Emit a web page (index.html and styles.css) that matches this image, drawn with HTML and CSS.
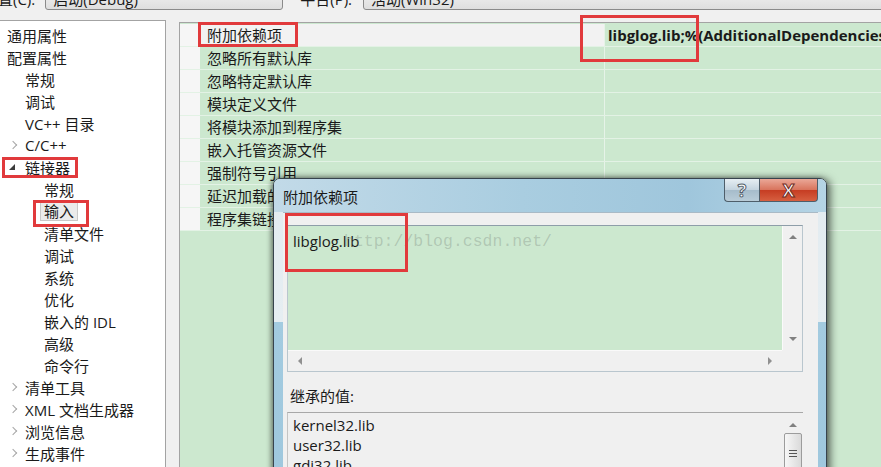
FILE: index.html
```html
<!DOCTYPE html>
<html lang="zh-CN">
<head>
    <meta charset="UTF-8">
    <title>链接器 - 输入</title>
    <link rel="stylesheet" href="styles.css">
</head>
<body>
    <div class="topbar">
        <span class="top-label label-config">置(C):</span>
        <div class="combo combo-config">启动(Debug)</div>
        <span class="top-label label-platform">平台(P):</span>
        <div class="combo combo-platform">活动(Win32)</div>
    </div>

    <div class="main">
        <ul class="tree">
            <li class="lvl0">通用属性</li>
            <li class="lvl0">配置属性</li>
            <li class="lvl1"><span class="twisty"></span>常规</li>
            <li class="lvl1"><span class="twisty"></span>调试</li>
            <li class="lvl1"><span class="twisty"></span>VC++ 目录</li>
            <li class="lvl1"><span class="twisty closed"></span>C/C++</li>
            <li class="lvl1"><span class="twisty open"></span>链接器</li>
            <li class="lvl2"><span class="twisty"></span>常规</li>
            <li class="lvl2"><span class="twisty"></span><span class="selected">输入</span></li>
            <li class="lvl2"><span class="twisty"></span>清单文件</li>
            <li class="lvl2"><span class="twisty"></span>调试</li>
            <li class="lvl2"><span class="twisty"></span>系统</li>
            <li class="lvl2"><span class="twisty"></span>优化</li>
            <li class="lvl2"><span class="twisty"></span>嵌入的 IDL</li>
            <li class="lvl2"><span class="twisty"></span>高级</li>
            <li class="lvl2"><span class="twisty"></span>命令行</li>
            <li class="lvl1"><span class="twisty closed"></span>清单工具</li>
            <li class="lvl1"><span class="twisty closed"></span>XML 文档生成器</li>
            <li class="lvl1"><span class="twisty closed"></span>浏览信息</li>
            <li class="lvl1"><span class="twisty closed"></span>生成事件</li>
        </ul>

        <div class="grid">
            <div class="row row-first">
                <div class="gutter"></div>
                <div class="name">附加依赖项</div>
                <div class="value"><b>libglog.lib;%(AdditionalDependencies)</b></div>
            </div>
            <div class="row"><div class="gutter"></div><div class="name">忽略所有默认库</div><div class="value"></div></div>
            <div class="row"><div class="gutter"></div><div class="name">忽略特定默认库</div><div class="value"></div></div>
            <div class="row"><div class="gutter"></div><div class="name">模块定义文件</div><div class="value"></div></div>
            <div class="row"><div class="gutter"></div><div class="name">将模块添加到程序集</div><div class="value"></div></div>
            <div class="row"><div class="gutter"></div><div class="name">嵌入托管资源文件</div><div class="value"></div></div>
            <div class="row"><div class="gutter"></div><div class="name">强制符号引用</div><div class="value"></div></div>
            <div class="row"><div class="gutter"></div><div class="name">延迟加载的 DLL</div><div class="value"></div></div>
            <div class="row"><div class="gutter"></div><div class="name">程序集链接资源</div><div class="value"></div></div>
        </div>
    </div>

    <!-- modal dialog on top of the property grid -->
    <div class="dialog">
        <div class="titlebar">
            <span class="title">附加依赖项</span>
            <div class="caption-buttons">
                <div class="cap-btn help">?</div>
                <div class="cap-btn close">X</div>
            </div>
        </div>
        <div class="client">
            <div class="edit">
                <div class="edit-text">libglog.lib</div>
                <div class="vscroll">
                    <span class="arrow up"></span>
                    <span class="arrow down"></span>
                </div>
                <div class="hscroll">
                    <span class="arrow left"></span>
                    <span class="arrow right"></span>
                </div>
                <div class="corner"></div>
            </div>
            <div class="inherit-label">继承的值:</div>
            <div class="inherit-list">
                <div class="items">
                    <div>kernel32.lib</div>
                    <div>user32.lib</div>
                    <div>gdi32.lib</div>
                    <div>winspool.lib</div>
                </div>
                <div class="vscroll list-scroll">
                    <span class="arrow up"></span>
                    <div class="thumb"><i></i><i></i><i></i></div>
                </div>
            </div>
        </div>
    </div>

    <div class="watermark">http://blog.csdn.net/</div>

    <!-- red annotation boxes -->
    <div class="mark mark-linker"></div>
    <div class="mark mark-input"></div>
    <div class="mark mark-name"></div>
    <div class="mark mark-value"></div>
    <div class="mark mark-edit"></div>
</body>
</html>
```

FILE: styles.css
```css
* {
    box-sizing: border-box;
}

body {
    margin: 0;
    width: 881px;
    height: 467px;
    overflow: hidden;
    position: relative;
    background-color: #f0f0f0;
    font-family: "Open Sans", "Noto Sans CJK SC", sans-serif;
    font-size: 15px;
    color: #1a1a1a;
}

/* top strip with the cut-off combo boxes */
.topbar {
    display: flex;
    align-items: flex-start;
    height: 20px;
}

.top-label {
    margin-top: -12px;
    line-height: 22px;
    white-space: nowrap;
}

.label-config {
    margin-left: -2px;
}

.label-platform {
    margin-left: 17px;
}

.combo {
    margin-top: -12px;
    height: 22px;
    line-height: 20px;
    padding-left: 7px;
    border: 1px solid #8a8a8a;
    border-radius: 3px;
    background: linear-gradient(#f3f3f3, #dedede);
    white-space: nowrap;
}

.combo-config {
    margin-left: 10px;
    width: 238px;
    flex: none;
}

.combo-platform {
    margin-left: 11px;
    flex: 1;
    margin-right: -4px;
}

.main {
    display: flex;
    height: 447px;
}

/* tree on the left */
.tree {
    flex: none;
    width: 166px;
    margin: 0;
    padding: 3px 0 0;
    list-style: none;
    background-color: #fff;
    border-top: 1px solid #a3a3a3;
    border-right: 1px solid #a3a3a3;
}

.tree li {
    display: flex;
    align-items: center;
    height: 22px;
    white-space: nowrap;
}

.tree .lvl0 {
    padding-left: 7px;
}

.tree .lvl1 {
    padding-left: 7px;
}

.tree .lvl2 {
    padding-left: 26px;
}

.twisty {
    flex: none;
    width: 18px;
    height: 22px;
    position: relative;
}

.twisty.closed::before {
    content: "";
    position: absolute;
    left: 3px;
    top: 8px;
    width: 5px;
    height: 5px;
    border-top: 1px solid #a6a6a6;
    border-right: 1px solid #a6a6a6;
    transform: rotate(45deg);
}

.twisty.open::before {
    content: "";
    position: absolute;
    left: 2px;
    top: 8px;
    border-left: 6px solid transparent;
    border-bottom: 6px solid #3c3c3c;
}

.selected {
    margin-left: -4px;
    padding: 0 3px;
    line-height: 18px;
    background-color: #ebebeb;
    border: 1px solid #c9c9c9;
}

/* property grid */
.grid {
    flex: 1;
    min-width: 0;
    margin: 2px 0 0 13px;
    padding-top: 1px;
    background-color: #cce8cf;
    border-top: 1px solid #a3a3a3;
    border-left: 1px solid #a3a3a3;
}

.row {
    display: flex;
    height: 23px;
    border-bottom: 1px solid #e3f2e5;
}

.gutter {
    flex: none;
    width: 20px;
    background-color: #f6f6f6;
}

.name {
    flex: none;
    width: 404px;
    padding-left: 7px;
    line-height: 22px;
    white-space: nowrap;
}

.row-first .name {
    background-color: #f2f2f2;
}

.value {
    flex: 1;
    min-width: 0;
    padding-left: 3px;
    line-height: 22px;
    white-space: nowrap;
    overflow: hidden;
    border-left: 1px solid #e6f3e8;
}

/* dialog */
.dialog {
    position: absolute;
    left: 273px;
    top: 178px;
    width: 554px;
    height: 320px;
    border: 1px solid #37434d;
    border-radius: 7px 7px 0 0;
    background: linear-gradient(#e2ebf0 0, #e6eef2 143px, #a3cbe0 143px, #9ec7dd 100%);
    box-shadow: 3px 1px 8px rgba(0, 0, 0, 0.6), -2px 0 5px rgba(0, 0, 0, 0.35);
}

.titlebar {
    display: flex;
    justify-content: space-between;
    align-items: flex-start;
    height: 33px;
    padding-left: 9px;
    border-radius: 6px 6px 0 0;
    background: linear-gradient(90deg, #c2dae8, #a9cde0 45%, #9fc6dc 75%, #b5d4e5);
}

.title {
    line-height: 36px;
}

.caption-buttons {
    display: flex;
    margin-right: 8px;
}

.cap-btn {
    height: 23px;
    text-align: center;
    font-weight: bold;
    color: #fff;
    border: 1px solid #4e5e6a;
    border-top: none;
}

.help {
    width: 35px;
    font-size: 18px;
    line-height: 22px;
    border-radius: 0 0 0 4px;
    border-right: none;
    background: linear-gradient(#e6eef3, #c3d3de 50%, #a6bccb 52%, #b9ccd8);
    -webkit-text-stroke: 1px #55616b;
}

.close {
    width: 59px;
    font-size: 18px;
    line-height: 22px;
    border-radius: 0 0 4px 0;
    background: linear-gradient(#eaa898, #d9755e 48%, #c63d23 52%, #d65f40);
    -webkit-text-stroke: 1px #6e2a1f;
}

.client {
    margin: 0 8px 0 9px;
    height: 290px;
    padding: 12px 0 0 4px;
    background-color: #f0f0f0;
    border-top: 1px solid #a9bac6;
}

.edit {
    display: grid;
    grid-template-columns: 1fr 20px;
    grid-template-rows: 1fr 21px;
    width: 516px;
    height: 147px;
    border: 1px solid #b9c6ce;
    border-top-color: #8e9ea9;
    background-color: #f0f0f0;
}

.edit-text {
    padding: 5px 0 0 5px;
    line-height: 20px;
    background-color: #cce8cf;
}

.vscroll {
    display: flex;
    flex-direction: column;
    justify-content: space-between;
    align-items: center;
    padding: 9px 0;
    background-color: #f0f0f0;
    border-left: 1px solid #fafafa;
}

.hscroll {
    display: flex;
    justify-content: space-between;
    align-items: center;
    padding: 0 10px;
    background-color: #f0f0f0;
    border-top: 1px solid #fafafa;
}

.corner {
    background-color: #f0f0f0;
}

.arrow {
    width: 0;
    height: 0;
}

.arrow.up {
    border-left: 4px solid transparent;
    border-right: 4px solid transparent;
    border-bottom: 4px solid #808080;
}

.arrow.down {
    border-left: 4px solid transparent;
    border-right: 4px solid transparent;
    border-top: 4px solid #808080;
}

.arrow.left {
    border-top: 4px solid transparent;
    border-bottom: 4px solid transparent;
    border-right: 4px solid #909090;
}

.arrow.right {
    border-top: 4px solid transparent;
    border-bottom: 4px solid transparent;
    border-left: 4px solid #909090;
}

.inherit-label {
    margin: 14px 0 0 3px;
    line-height: 20px;
}

.inherit-list {
    display: flex;
    width: 516px;
    height: 70px;
    margin-top: 6px;
    border-top: 1px solid #a8a8a8;
    border-left: 1px solid #c4c4c4;
}

.items {
    flex: 1;
    padding: 2px 0 0 5px;
    line-height: 20px;
}

.list-scroll {
    width: 20px;
    justify-content: flex-start;
    gap: 6px;
    padding: 10px 0 0;
    border-left: none;
}

.thumb {
    display: flex;
    flex-direction: column;
    justify-content: center;
    align-items: center;
    gap: 2px;
    width: 18px;
    height: 40px;
    border: 1px solid #9c9c9c;
    border-radius: 2px;
    background: linear-gradient(90deg, #f7f7f7, #dadada);
}

.thumb i {
    display: block;
    width: 8px;
    height: 1px;
    background-color: #555;
}

.watermark {
    position: absolute;
    left: 344px;
    top: 232px;
    font-family: "Liberation Mono", monospace;
    font-size: 16.5px;
    color: rgba(110, 120, 112, 0.3);
    white-space: nowrap;
}

/* annotation boxes */
.mark {
    position: absolute;
    border: 3px solid #e13a3c;
}

.mark-linker {
    left: 2px;
    top: 157px;
    width: 76px;
    height: 21px;
}

.mark-input {
    left: 33px;
    top: 200px;
    width: 56px;
    height: 27px;
}

.mark-name {
    left: 198px;
    top: 22px;
    width: 100px;
    height: 25px;
}

.mark-value {
    left: 580px;
    top: 15px;
    width: 119px;
    height: 47px;
}

.mark-edit {
    left: 285px;
    top: 213px;
    width: 123px;
    height: 59px;
}
```
